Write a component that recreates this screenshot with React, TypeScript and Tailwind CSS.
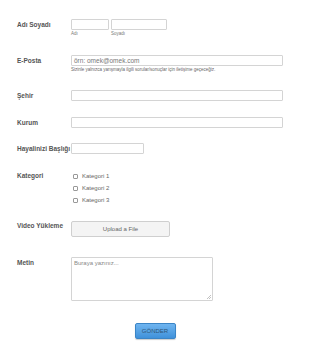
export default function App() {
  const label = 'w-[54px] shrink-0 text-[6.5px] leading-[8px] font-bold text-[#555]';
  const box = 'h-[11px] border border-[#d4d4d4] bg-white rounded-[1px]';

  return (
    <div
      className="w-[310px] h-[355px] bg-white pl-[17px] flex flex-col"
      style={{ fontFamily: '"Liberation Sans", Arial, sans-serif' }}
    >
      {/* Ad Soyad */}
      <div className="flex mt-[19px]">
        <div className={`${label} pt-[2px]`}>Adı Soyadı</div>
        <div className="flex gap-[2px]">
          <div className="flex flex-col">
            <div className={`${box} w-[38px]`} />
            <span className="text-[4.5px] leading-[6px] text-[#777] mt-[1px]">Adı</span>
          </div>
          <div className="flex flex-col">
            <div className={`${box} w-[56px]`} />
            <span className="text-[4.5px] leading-[6px] text-[#777] mt-[1px]">Soyadı</span>
          </div>
        </div>
      </div>

      {/* E-Posta */}
      <div className="flex mt-[18px]">
        <div className={`${label} pt-[2px]`}>E-Posta</div>
        <div className="flex flex-col">
          <div className={`${box} w-[212px] h-[10px] flex items-center pl-[2px]`}>
            <span className="text-[6.5px] leading-[8px] text-[#777]">örn: omek@omek.com</span>
          </div>
          <span className="text-[4.5px] leading-[6px] text-[#666] mt-[1px]">
            Sizinle yalnızca yarışmayla ilgili sorular/sonuçlar için iletişime geçeceğiz.
          </span>
        </div>
      </div>

      {/* Şehir */}
      <div className="flex mt-[17px]">
        <div className={`${label} pt-[2px]`}>Şehir</div>
        <div className={`${box} w-[212px]`} />
      </div>

      {/* Kurum */}
      <div className="flex mt-[16px]">
        <div className={`${label} pt-[2px]`}>Kurum</div>
        <div className={`${box} w-[212px]`} />
      </div>

      {/* Başlık */}
      <div className="flex mt-[15px]">
        <div className={`${label} pt-[2px]`}>Hayalinizi Başlığı</div>
        <div className={`${box} w-[73px]`} />
      </div>

      {/* Kategori */}
      <div className="flex mt-[16px]">
        <div className={`${label} pt-[2px]`}>Kategori</div>
        <div className="flex flex-col">
          {['Kategori 1', 'Kategori 2', 'Kategori 3'].map((k) => (
            <div key={k} className="flex items-center h-[12px] pl-[2px] gap-[4px]">
              <div className="w-[5px] h-[5px] border border-[#999] rounded-[1px] bg-white" />
              <span className="text-[6px] leading-[8px] text-[#666]">{k}</span>
            </div>
          ))}
        </div>
      </div>

      {/* Video */}
      <div className="flex mt-[15px]">
        <div className={`${label} pt-[1px]`}>Video Yükleme</div>
        <div className="w-[99px] h-[16px] border border-[#cfcfcf] bg-[#f4f4f4] rounded-[2px] flex items-center justify-center">
          <span className="text-[6px] text-[#666]">Upload a File</span>
        </div>
      </div>

      {/* Metin */}
      <div className="flex mt-[20px]">
        <div className={`${label} pt-[2px]`}>Metin</div>
        <div className="relative w-[142px] h-[44px] border border-[#d4d4d4] bg-white rounded-[1px] px-[2px] pt-[1px]">
          <span className="block text-[6px] leading-[8px] text-[#888]">Buraya yazınız...</span>
          <svg className="absolute right-[1px] bottom-[1px]" width="4" height="4" viewBox="0 0 4 4">
            <path d="M4 0 L0 4 M4 2 L2 4" stroke="#999" strokeWidth="0.6" />
          </svg>
        </div>
      </div>

      {/* Gönder */}
      <div className="flex justify-center mt-[22px] pr-[17px]">
        <button className="w-[41px] h-[16px] rounded-[2px] border border-[#3b85c6] bg-gradient-to-b from-[#6fb5f0] to-[#3f91da] shadow-[0_1px_1px_rgba(0,0,0,0.2)] flex items-center justify-center">
          <span className="text-[6px] text-[#2d5577]">GÖNDER</span>
        </button>
      </div>
    </div>
  );
}
